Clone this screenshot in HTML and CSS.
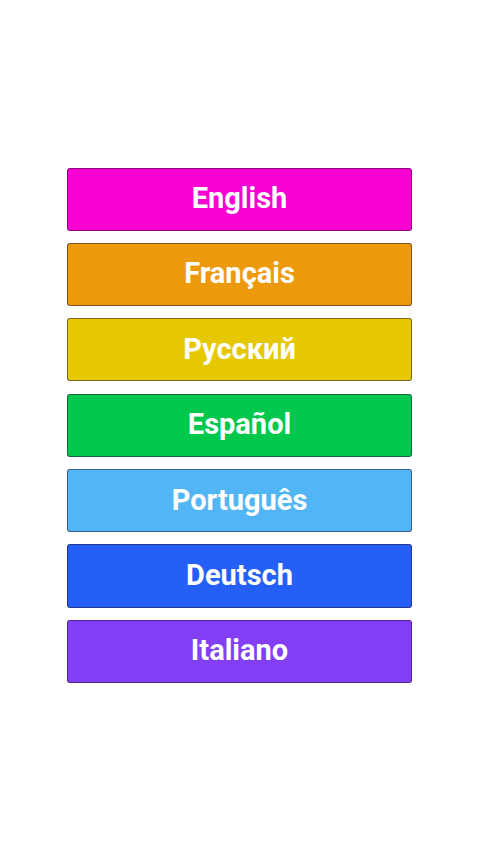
FILE: index.html
```html
<!DOCTYPE html>
<html>
<head>
<meta charset="utf-8">
<link rel="stylesheet" href="styles.css">
</head>
<body>
<div class="screen">
  <div class="list">
    <button class="lang en">English</button>
    <button class="lang fr">Français</button>
    <button class="lang ru">Русский</button>
    <button class="lang es">Español</button>
    <button class="lang pt">Português</button>
    <button class="lang de">Deutsch</button>
    <button class="lang it">Italiano</button>
  </div>
</div>
</body>
</html>
```
FILE: styles.css
```css
html, body {
  margin: 0;
  padding: 0;
  background: #ffffff;
}
.screen {
  width: 480px;
  height: 853px;
  display: flex;
  align-items: flex-start;
  justify-content: center;
  box-sizing: border-box;
  padding-top: 167.5px;
}
.list {
  display: flex;
  flex-direction: column;
  gap: 12.2px;
  width: 345px;
  margin-left: -1px;
}
.lang {
  height: 63.2px;
  width: 100%;
  border: 1.5px solid rgba(40, 20, 60, 0.55);
  border-radius: 3px;
  color: #ffffff;
  font-family: Roboto, "Noto Sans", sans-serif;
  font-weight: 700;
  font-size: 29px;
  padding: 0 0 2px 0;
  margin: 0;
  display: flex;
  align-items: center;
  justify-content: center;
  box-sizing: border-box;
}
.en { background: #fb00d2; }
.fr { background: #ec9a0c; }
.ru { background: #e6c800; }
.es { background: #00c84c; }
.pt { background: #52b5f5; }
.de { background: #2460f8; }
.it { background: #823ff6; }
```
